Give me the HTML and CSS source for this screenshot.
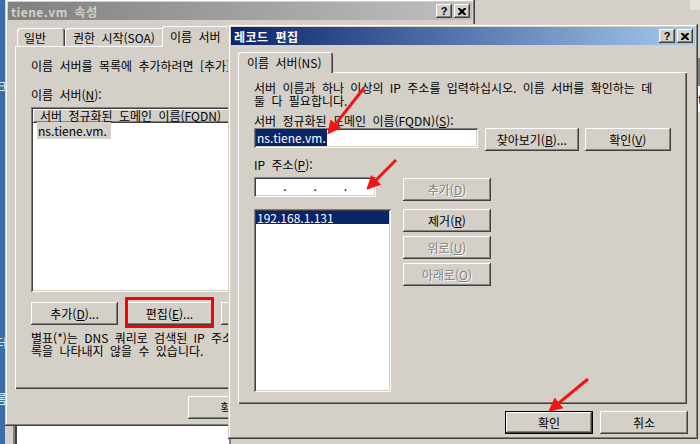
FILE: index.html
```html
<!DOCTYPE html>
<html lang="ko">
<head>
<meta charset="UTF-8">
<title>레코드 편집</title>
<link rel="stylesheet" href="styles.css">
</head>
<body>
<div class="desktop">

    <div class="desk-strip">
        <span class="desk-label" style="top: 80px">네트워크</span>
        <span class="desk-label" style="top: 336px">컴퓨터</span>
        <span class="desk-label" style="top: 392px">크롬</span>
    </div>

    <div class="backwin backwin-bottom">
        <div class="backwin-client"></div>
    </div>
    <div class="backwin backwin-right">
        <div class="bw-bar"></div>
        <div class="bw-client">t</div>
    </div>

    <!-- properties dialog (inactive) -->
    <div class="win props">
        <div class="titlebar inactive">
            <span class="title">tiene.vm 속성</span>
            <div class="caption-btns">
                <span class="cbtn">?</span>
                <span class="cbtn"><svg width="8" height="7" viewBox="0 0 8 7"><path d="M0 0h2l2 2 2-2h2v1L5.5 3.5 8 6v1H6L4 5 2 7H0V6l2.5-2.5L0 1z"/></svg></span>
            </div>
        </div>
        <div class="tabs props-tabs">
            <div class="tab t-general">일반</div>
            <div class="tab t-soa">권한 시작(SOA)</div>
            <div class="tab active t-ns">이름 서버</div>
        </div>
        <div class="panel props-panel">
            <p class="line">이름 서버를 목록에 추가하려면 [추가]를 클릭하십시오.</p>
            <p class="line gap-label">이름 서버(<u>N</u>):</p>
            <div class="listview">
                <div class="lv-head">
                    <span class="lv-col">서버 정규화된 도메인 이름(FQDN)</span>
                    <span class="lv-col">IP 주소</span>
                </div>
                <div class="lv-row"><span class="lv-sel">ns.tiene.vm.</span></div>
            </div>
            <div class="btnrow">
                <button class="btn">추가(<u>D</u>)...</button>
                <button class="btn marked">편집(<u>E</u>)...</button>
                <button class="btn">제거(<u>R</u>)</button>
            </div>
            <p class="note">별표(*)는 DNS 쿼리로 검색된 IP 주소이며 현재 영역의 레코드 목<br>록을 나타내지 않을 수 있습니다.</p>
        </div>
        <div class="dlg-btns props-btns">
            <button class="btn">확인</button>
            <button class="btn">취소</button>
            <button class="btn">적용(<u>A</u>)</button>
        </div>
    </div>

    <!-- record edit dialog (active) -->
    <div class="win record">
        <div class="titlebar active">
            <span class="title">레코드 편집</span>
            <div class="caption-btns">
                <span class="cbtn">?</span>
                <span class="cbtn"><svg width="8" height="7" viewBox="0 0 8 7"><path d="M0 0h2l2 2 2-2h2v1L5.5 3.5 8 6v1H6L4 5 2 7H0V6l2.5-2.5L0 1z"/></svg></span>
            </div>
        </div>
        <div class="tabs rec-tabs">
            <div class="tab active">이름 서버(NS)</div>
        </div>
        <div class="panel rec-panel">
            <p class="line">서버 이름과 하나 이상의 IP 주소를 입력하십시오. 이름 서버를 확인하는 데<br>둘 다 필요합니다.</p>
            <p class="line gap-fqdn">서버 정규화된 도메인 이름(FQDN)(<u>S</u>):</p>
            <div class="fqdn-row">
                <div class="field fqdn"><span class="sel">ns.tiene.vm.</span></div>
                <button class="btn browse">찾아보기(<u>B</u>)...</button>
                <button class="btn resolve">확인(<u>V</u>)</button>
            </div>
            <p class="line gap-ip">IP 주소(<u>P</u>):</p>
            <div class="ip-area">
                <div class="ip-left">
                    <div class="field ipbox">
                        <span class="oct"></span><span class="ipdot">.</span>
                        <span class="oct"></span><span class="ipdot">.</span>
                        <span class="oct"></span><span class="ipdot">.</span>
                        <span class="oct"></span>
                    </div>
                    <div class="field iplist">
                        <div class="ip-item">192.168.1.131</div>
                    </div>
                </div>
                <div class="ip-btns">
                    <button class="btn off b-add">추가(<u>D</u>)</button>
                    <button class="btn b-del">제거(<u>R</u>)</button>
                    <button class="btn off b-up">위로(<u>U</u>)</button>
                    <button class="btn off b-up">아래로(<u>O</u>)</button>
                </div>
            </div>
        </div>
        <div class="dlg-btns rec-btns">
            <button class="btn default">확인</button>
            <button class="btn">취소</button>
        </div>
    </div>

    <svg class="marks" width="700" height="444" viewBox="0 0 700 444">
        <defs>
            <marker id="head" viewBox="0 0 10 10" refX="8" refY="5" markerWidth="5.5" markerHeight="4.6" orient="auto">
                <path d="M0 0L10 5L0 10z" fill="#f21414"/>
            </marker>
        </defs>
        <line x1="364" y1="88" x2="329" y2="132.4" marker-end="url(#head)"/>
        <line x1="396" y1="160" x2="368.3" y2="187.7" marker-end="url(#head)"/>
        <line x1="588" y1="379" x2="550.5" y2="409.9" marker-end="url(#head)"/>
    </svg>

</div>
</body>
</html>
```

FILE: styles.css
```css
:root {
    --face: #d4d0c8;
    --shadow: #808080;
    --dark: #404040;
    --navy: #0a246a;
}
* {
    box-sizing: border-box;
}
body {
    margin: 0;
    font-family: "Noto Sans CJK KR", "Noto Sans", sans-serif;
    font-size: 12px;
    line-height: 13px;
    word-spacing: 3px;
    color: #000;
}
p {
    margin: 0;
}
u {
    text-decoration: underline;
    text-underline-offset: 1px;
}
.desktop {
    position: relative;
    width: 700px;
    height: 444px;
    overflow: hidden;
    background: var(--face);
}

/* things behind the dialogs */
.desk-strip {
    position: absolute;
    left: 0;
    top: 0;
    width: 6px;
    height: 444px;
    background: #3a6ea5;
    overflow: hidden;
}
.desk-label {
    position: absolute;
    right: -1px;
    color: #fff;
    white-space: nowrap;
}
.backwin {
    position: absolute;
    background: var(--face);
}
.backwin-bottom {
    left: 5px;
    top: 400px;
    width: 226px;
    height: 44px;
    display: flex;
    padding-left: 8px;
}
.backwin-client {
    flex: 1;
    background: #fff;
    border-left: 2px solid var(--shadow);
    border-right: 2px solid var(--shadow);
    box-shadow: inset 2px 0 var(--dark);
}
.backwin-right {
    left: 690px;
    top: 0;
    width: 10px;
    height: 444px;
    border-top: 10px solid #e4e2dc;
}
.bw-bar {
    margin-top: 48px;
    height: 28px;
    background: var(--shadow);
}
.bw-client {
    height: 26px;
    background: #fff;
    padding-left: 8px;
    padding-top: 6px;
}

/* windows */
.win {
    position: absolute;
    padding: 3px;
    background: var(--face);
    box-shadow: inset -1px -1px var(--dark), inset 1px 1px var(--face),
                inset -2px -2px var(--shadow), inset 2px 2px #fff;
    display: flex;
    flex-direction: column;
}
.props {
    left: 5px;
    top: -1px;
    width: 470px;
    height: 427px;
    z-index: 1;
}
.record {
    left: 228px;
    top: 24px;
    width: 470px;
    height: 415px;
    z-index: 2;
}
.titlebar {
    height: 18px;
    display: flex;
    align-items: center;
    padding: 0 2px 0 3px;
}
.titlebar.inactive {
    background: linear-gradient(to right, #808080, #c0c0c0);
    color: var(--face);
}
.titlebar.active {
    background: linear-gradient(to right, var(--navy), #a6caf0);
    color: #fff;
}
.title {
    font-weight: bold;
    letter-spacing: 0.5px;
}
.caption-btns {
    margin-left: auto;
    display: flex;
    gap: 2px;
}
.cbtn {
    width: 16px;
    height: 14px;
    background: var(--face);
    color: #000;
    font-family: "Liberation Sans", sans-serif;
    font-weight: bold;
    font-size: 11px;
    line-height: 14px;
    text-align: center;
    display: flex;
    align-items: center;
    justify-content: center;
    box-shadow: inset -1px -1px var(--dark), inset 1px 1px #fff, inset -2px -2px var(--shadow);
}
.cbtn svg {
    display: block;
    margin-left: -1px;
}

/* tabs */
.tabs {
    display: flex;
    align-items: flex-end;
    margin-left: 7px;
    position: relative;
    z-index: 1;
}
.props-tabs {
    margin-top: 6px;
    height: 20px;
}
.rec-tabs {
    margin-top: 7px;
    height: 20px;
}
.tab {
    height: 18px;
    padding: 3px 7px 0 7px;
    white-space: nowrap;
    background: var(--face);
    border-radius: 3px 3px 0 0;
    box-shadow: inset 1px 1px #fff, inset -1px 0 var(--dark), inset -2px 0 var(--shadow);
}
.tab.active {
    height: 21px;
    margin-bottom: -1px;
    padding: 4px 8px 0 8px;
    margin-left: -2px;
    margin-right: -2px;
    position: relative;
}
.t-general {
    margin-left: 2px;
    width: 48px;
}
.t-soa {
    width: 99px;
    padding-left: 8px;
}
.t-ns {
    width: 72px;
}
.rec-tabs .tab.active {
    margin-left: 0;
    width: 95px;
    padding-left: 9px;
}
.panel {
    margin-left: 7px;
    background: var(--face);
    box-shadow: inset 1px 1px #fff, inset -1px -1px var(--dark), inset -2px -2px var(--shadow);
}
.props-panel {
    width: 450px;
    height: 343px;
    padding: 13px 16px 0;
}
.rec-panel {
    width: 449px;
    height: 332px;
    padding: 9px 16px 0;
}
.line {
    white-space: nowrap;
}
.gap-label {
    margin-top: 16px;
}
.gap-fqdn {
    margin-top: 7px;
}
.gap-ip {
    margin-top: 7px;
}

/* controls */
.btn {
    font: inherit;
    line-height: 13px;
    word-spacing: 3px;
    color: #000;
    background: var(--face);
    border: none;
    padding: 0;
    height: 23px;
    width: 87px;
    white-space: nowrap;
    box-shadow: inset -1px -1px var(--dark), inset 1px 1px #fff, inset -2px -2px var(--shadow);
}
.btn.off {
    color: var(--shadow);
    text-shadow: 1px 1px 0 #fff;
}
.btn.default {
    box-shadow: inset 0 0 0 1px #000, inset -2px -2px var(--dark), inset 2px 2px #fff, inset -3px -3px var(--shadow);
}
.field {
    background: #fff;
    box-shadow: inset 1px 1px var(--shadow), inset -1px -1px #fff,
                inset 2px 2px var(--dark), inset -2px -2px var(--face);
}
.sel {
    background: var(--navy);
    color: #fff;
    padding: 0 1px;
}

/* properties page */
.listview {
    margin-top: 6px;
    width: 420px;
    height: 185px;
    padding: 2px;
    background: #fff;
    box-shadow: inset 1px 1px var(--shadow), inset -1px -1px #fff,
                inset 2px 2px var(--dark), inset -2px -2px var(--face);
}
.lv-head {
    display: flex;
    height: 14px;
}
.lv-col {
    background: var(--face);
    padding: 0 7px;
    line-height: 14px;
    white-space: nowrap;
    box-shadow: inset -1px -1px var(--dark), inset 1px 1px #fff, inset -2px -2px var(--shadow);
}
.lv-col:first-child {
    width: 212px;
}
.lv-col:last-child {
    flex: 1;
}
.lv-row {
    height: 14px;
    margin-top: 1px;
    padding-left: 4px;
    line-height: 14px;
}
.lv-sel {
    background: var(--face);
    padding: 0 4px 0 1px;
}
.btnrow {
    margin-top: 10px;
    display: flex;
    gap: 8px;
}
.marked {
    position: relative;
}
.marked::after {
    content: "";
    position: absolute;
    top: -5px;
    left: -1px;
    right: -1px;
    bottom: -3px;
    border: 3px solid #f00;
}
.note {
    margin-top: 6px;
    white-space: nowrap;
}
.dlg-btns {
    display: flex;
    justify-content: flex-end;
    margin-top: 7px;
    padding-right: 7px;
}
.props-btns {
    gap: 8px;
}
.rec-btns {
    gap: 7px;
}
.rec-btns .btn {
    width: 88px;
}

/* record edit page */
.fqdn-row {
    margin-top: 1px;
    display: flex;
    align-items: flex-start;
}
.fqdn {
    width: 228px;
    height: 20px;
    padding: 3px 2px 0;
    line-height: 14px;
    white-space: nowrap;
}
.browse {
    width: 95px;
    margin-left: 7px;
}
.resolve {
    width: 88px;
    margin-left: 6px;
}
.ip-area {
    margin-top: 6px;
    display: flex;
    gap: 12px;
}
.ip-left {
    width: 137px;
}
.ipbox {
    width: 122px;
    height: 20px;
    display: flex;
    padding: 0 2px;
    line-height: 18px;
}
.oct {
    flex: 1;
}
.ipdot {
    width: 3px;
    text-align: center;
}
.iplist {
    margin-top: 12px;
    height: 183px;
    padding: 2px;
}
.ip-item {
    background: var(--navy);
    color: #fff;
    height: 13px;
    padding-left: 1px;
    line-height: 13px;
}
.ip-btns {
    display: flex;
    flex-direction: column;
}
.ip-btns .btn {
    width: 88px;
}
.b-add {
    margin-top: 1px;
}
.b-del {
    margin-top: 8px;
}
.b-up {
    margin-top: 4px;
}

/* red annotations */
.marks {
    position: absolute;
    left: 0;
    top: 0;
    z-index: 3;
    pointer-events: none;
}
.marks line {
    stroke: #f21414;
    stroke-width: 3;
}
```
